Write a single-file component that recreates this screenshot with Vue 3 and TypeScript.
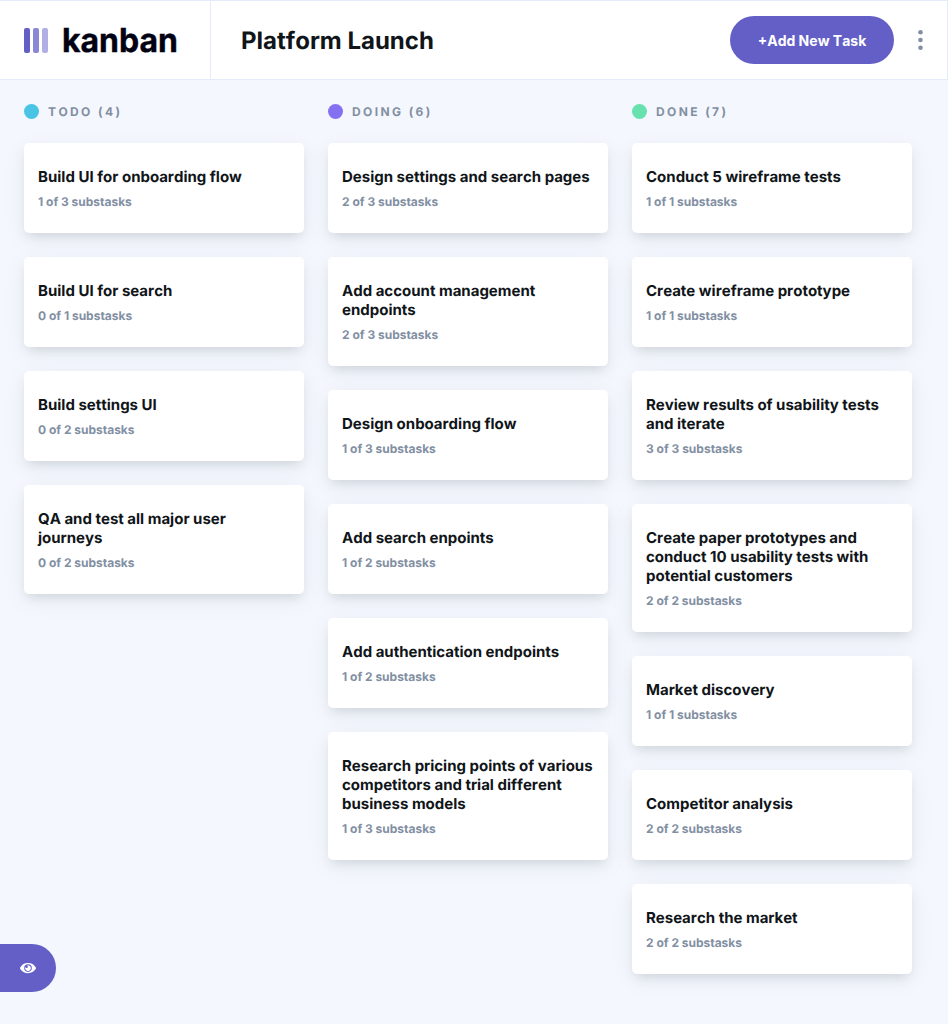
<script setup lang="ts">
interface Task {
  title: string
  done: number
  total: number
}

interface Column {
  name: string
  tone: string
  tasks: Task[]
}

const task = (title: string, done: number, total: number): Task => ({ title, done, total })

const columns: Column[] = [
  {
    name: 'TODO',
    tone: 'todo',
    tasks: [
      task('Build UI for onboarding flow', 1, 3),
      task('Build UI for search', 0, 1),
      task('Build settings UI', 0, 2),
      task('QA and test all major user journeys', 0, 2),
    ],
  },
  {
    name: 'DOING',
    tone: 'doing',
    tasks: [
      task('Design settings and search pages', 2, 3),
      task('Add account management endpoints', 2, 3),
      task('Design onboarding flow', 1, 3),
      task('Add search enpoints', 1, 2),
      task('Add authentication endpoints', 1, 2),
      task('Research pricing points of various competitors and trial different business models', 1, 3),
    ],
  },
  {
    name: 'DONE',
    tone: 'done',
    tasks: [
      task('Conduct 5 wireframe tests', 1, 1),
      task('Create wireframe prototype', 1, 1),
      task('Review results of usability tests and iterate', 3, 3),
      task('Create paper prototypes and conduct 10 usability tests with potential customers', 2, 2),
      task('Market discovery', 1, 1),
      task('Competitor analysis', 2, 2),
      task('Research the market', 2, 2),
    ],
  },
]
</script>

<template>
  <div class="app">
    <header class="header">
      <div class="brand">
        <svg class="bars" width="24" height="25" viewBox="0 0 24 25" aria-hidden="true">
          <g fill="#635fc7">
            <rect width="6" height="25" rx="2" />
            <rect x="9" width="6" height="25" rx="2" opacity=".75" />
            <rect x="18" width="6" height="25" rx="2" opacity=".5" />
          </g>
        </svg>
        <svg class="wordmark" width="118" height="34" viewBox="0 0 118 34">
          <text x="-1" y="28" textLength="116" lengthAdjust="spacingAndGlyphs">kanban</text>
        </svg>
      </div>
      <div class="bar">
        <h1 class="title">Platform Launch</h1>
        <button class="add" type="button">+Add New Task</button>
        <button class="more" type="button" aria-label="Board options">
          <svg width="5" height="20" viewBox="0 0 5 20" fill="#828fa3">
            <circle cx="2.5" cy="2.3" r="2.3" />
            <circle cx="2.5" cy="10" r="2.3" />
            <circle cx="2.5" cy="17.7" r="2.3" />
          </svg>
        </button>
      </div>
    </header>

    <main class="board">
      <section v-for="column in columns" :key="column.name" class="column">
        <h2 class="heading">
          <span class="dot" :class="column.tone"></span>
          {{ column.name }} ({{ column.tasks.length }})
        </h2>
        <article v-for="item in column.tasks" :key="item.title" class="card">
          <h3 class="card-title">{{ item.title }}</h3>
          <p class="meta">{{ item.done }} of {{ item.total }} substasks</p>
        </article>
      </section>
    </main>

    <button class="reveal" type="button" aria-label="Show sidebar">
      <svg width="16" height="11" viewBox="0 0 16 11">
        <path fill="#fff" d="M15.815 4.434A9.055 9.055 0 0 0 8 0 9.055 9.055 0 0 0 .185 4.434a1.333 1.333 0 0 0 0 1.354A9.055 9.055 0 0 0 8 10.222c3.33 0 6.25-1.777 7.815-4.434a1.333 1.333 0 0 0 0-1.354ZM8 8.89A3.776 3.776 0 0 1 4.222 5.11 3.776 3.776 0 0 1 8 1.333a3.776 3.776 0 0 1 3.778 3.778A3.776 3.776 0 0 1 8 8.89Zm2.889-3.778a2.889 2.889 0 1 1-5.438-1.36 1.19 1.19 0 1 0 1.19-1.189H6.64a2.889 2.889 0 0 1 4.25 2.549Z" />
      </svg>
    </button>
  </div>
</template>

<style>
body {
  margin: 0;
  background: #f4f7fd;
}
</style>

<style scoped>
.app {
  box-sizing: border-box;
  height: 1024px;
  overflow: hidden;
  background: #f4f7fd;
  font-family: Inter, sans-serif;
  color: #101519;
  font-kerning: none;
  text-rendering: geometricPrecision;
}

button {
  padding: 0;
  border: 0;
  font: inherit;
  cursor: pointer;
}

h1,
h2,
h3,
p {
  margin: 0;
}

.header {
  box-sizing: border-box;
  display: flex;
  height: 80px;
  border: 1px solid #e4ebfa;
  border-left: 0;
  background: #fff;
}

.brand {
  box-sizing: border-box;
  display: flex;
  align-items: center;
  gap: 15px;
  width: 211px;
  padding: 1px 0 0 24px;
  border-right: 1px solid #e4ebfa;
}

.wordmark {
  overflow: visible;
}

.wordmark text {
  font: 700 33px Inter, sans-serif;
  fill: #000112;
  stroke: #000112;
  stroke-width: 0.4px;
}

.bar {
  display: flex;
  flex: 1;
  align-items: center;
  padding: 0 24px 0 30px;
}

.title {
  flex: 1;
  padding-top: 2px;
  font-size: 24px;
  font-weight: 700;
  line-height: 30px;
}

.add {
  width: 164px;
  height: 48px;
  border-radius: 24px;
  background: #635fc7;
  color: #fff;
  font-size: 14px;
  font-weight: 700;
}

.more {
  display: flex;
  margin-left: 24px;
  background: none;
}

.board {
  display: flex;
  gap: 24px;
  padding: 24px;
}

.column {
  flex: 0 0 280px;
}

.heading {
  display: flex;
  align-items: center;
  gap: 9px;
  height: 15px;
  margin-bottom: 24px;
  color: #828fa3;
  font-size: 12px;
  font-weight: 700;
  letter-spacing: 2.4px;
  line-height: 15px;
}

.dot {
  width: 15px;
  height: 15px;
  border-radius: 50%;
}

.todo {
  background: #49c4e5;
}

.doing {
  background: #8471f2;
}

.done {
  background: #67e2ae;
}

.card {
  margin-bottom: 24px;
  padding: 24px 14px;
  border-radius: 5px;
  background: #fff;
  box-shadow: 0 6px 24px rgba(54, 78, 126, 0.06), 0 6px 12px -3px rgba(0, 0, 0, 0.12);
}

.card-title {
  font-size: 15px;
  font-weight: 700;
  line-height: 19px;
}

.meta {
  margin-top: 8px;
  color: #828fa3;
  font-size: 12px;
  font-weight: 700;
  line-height: 15px;
}

.reveal {
  position: fixed;
  bottom: 32px;
  left: 0;
  display: flex;
  align-items: center;
  justify-content: center;
  width: 56px;
  height: 48px;
  border-radius: 0 24px 24px 0;
  background: #635fc7;
}
</style>
